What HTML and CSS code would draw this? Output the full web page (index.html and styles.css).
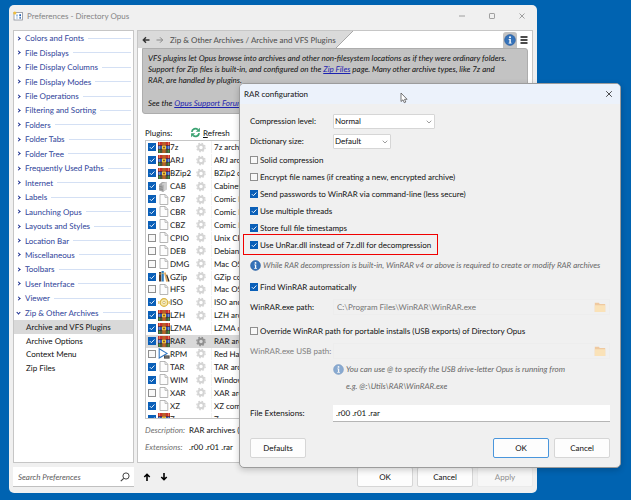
FILE: index.html
```html
<!DOCTYPE html>
<html lang="en">
<head>
<meta charset="utf-8">
<title>Preferences - Directory Opus</title>
<link rel="stylesheet" href="styles.css">
</head>
<body>
<svg class="defs" width="0" height="0" aria-hidden="true">
  <symbol id="rar" viewBox="0 0 12 11">
    <rect x="0" y="0" width="12" height="4" fill="#c8322e"/><rect x="0" y="3.6" width="12" height="3.6" fill="#3b5bb0"/><rect x="0" y="7" width="12" height="4" fill="#4a5a3a"/>
    <path d="M0 3.6h12M0 7.2h12" stroke="#3a2033" stroke-width=".7"/>
    <path d="M1.5 0v3.2M10.5 0v3.2" stroke="#e98b5a" stroke-width=".8"/><path d="M1.5 4v3M10.5 4v3" stroke="#86a4e0" stroke-width=".8"/><path d="M1.5 7.6v3M10.5 7.6v3" stroke="#3f9a48" stroke-width="1"/>
    <rect x="4.3" y="0" width="3.4" height="11" fill="#b8622a"/><rect x="4" y="3.8" width="4" height="3.4" fill="#f3d13e"/><rect x="5.2" y="4.7" width="1.6" height="1.6" fill="#7a3a20"/>
  </symbol>
  <symbol id="doc" viewBox="0 0 12 11"><path d="M2 .5h5.2l2.6 2.7v7.3H2z" fill="#fdfdfd" stroke="#a3a3a3" stroke-width=".8"/><path d="M7 .6v2.8h2.7" fill="none" stroke="#a3a3a3" stroke-width=".7"/></symbol>
  <symbol id="cab" viewBox="0 0 12 11"><path d="M1 3.5 4 1h5v7L5 10.8 1 9.6z" fill="#a8a8a8"/><path d="M4 2.6 9 .8v7.4l-4 2.6z" fill="#cfcfcf"/><path d="M1.3 5.5l3.4.6M1.3 7.8l3.4.6" stroke="#6f6f6f" stroke-width=".6"/><path d="M5 10.8V3.8" stroke="#808080" stroke-width=".6"/></symbol>
  <symbol id="gzip" viewBox="0 0 12 11"><path d="M1 1h2.3v9.5H1z" fill="#5b3a25"/><path d="M3.6 0h2.2v10.5H3.6z" fill="#2e7fc1"/><path d="M6 1.8l1.6-.6 2.6 9.2-2 .4z" fill="#dfa75e"/><path d="M8.2 4l1-.4 2.4 6.7-1.3.4z" fill="#333"/><path d="M1 3h2.3M3.6 2.4h2.2" stroke="#e7c66b" stroke-width=".7"/></symbol>
  <symbol id="iso" viewBox="0 0 12 11"><circle cx="6" cy="5.5" r="3.8" fill="#f6e9ae" stroke="#d9b445" stroke-width="1.2"/><circle cx="6" cy="5.5" r="1.2" fill="#fff" stroke="#b89a40" stroke-width=".6"/><path d="M.8 4v3M11.2 4v3" stroke="#e6c765" stroke-width="1.2"/></symbol>
  <symbol id="rpm" viewBox="0 0 12 11"><path d="M1.2.8 9 5.4 1.2 10z" fill="#fff" stroke="#2f76c4" stroke-width="1.1"/><rect x="6" y="7.4" width="5.6" height="3.2" fill="#4a4a4a"/><path d="M7 9h3.6" stroke="#bbb" stroke-width=".6"/></symbol>
  <symbol id="gear" viewBox="0 0 12 12"><circle cx="6" cy="6" r="4.6" fill="none" stroke="currentColor" stroke-width="1.3" stroke-dasharray="1.8 1.81"/><circle cx="6" cy="6" r="3" fill="none" stroke="currentColor" stroke-width="2.2"/></symbol>
  <symbol id="info" viewBox="0 0 12 12"><circle cx="6" cy="6" r="5.4" fill="#3572b9" stroke="#275b9d" stroke-width=".6"/><circle cx="6" cy="3.2" r="1" fill="#fff"/><path d="M4.6 5h2.2v3.7h.8v.8h-3v-.8h.8V5.8h-.8z" fill="#fff"/></symbol>
  <symbol id="down" viewBox="0 0 6 4"><path d="M.7.7 3 3 5.3.7" fill="none" stroke="#858585" stroke-width=".8"/></symbol>
  <symbol id="tick" viewBox="0 0 8 8"><path d="M1.8 4.100l1.600 1.600 3-3.200" fill="none" stroke="#fff" stroke-width=".9"/></symbol>
  <symbol id="folder" viewBox="0 0 12 12"><path d="M.8 1.8h4l1 1.2h5.4v8H.8z" fill="#efc9a0"/><path d="M.8 4.2h10.4v6.8H.8z" fill="#fae2b8"/></symbol>
</svg>

<main class="window">
  <header class="titlebar">
    <svg class="appicon" viewBox="0 0 10 10"><rect x="1" y="1.5" width="8.5" height="7.5" fill="#fff" stroke="#8a9099" stroke-width=".8"/><path d="M3 3.600h2v1.800H3zM3 6.400h2v1.200H3z" fill="#9ec1ea"/><path d="M6.300 3.200h1.700v1.700H6.300zM6.500 5.800h1.300v2H6.500z" fill="#235fae"/><circle cx="1.8" cy="2" r="1.6" fill="#eebd3d"/></svg>
    <h1>Preferences - Directory Opus</h1>
    <button class="cap" aria-label="Minimize"><svg viewBox="0 0 8 8"><path d="M1 4h6"/></svg></button>
    <button class="cap" aria-label="Maximize"><svg viewBox="0 0 8 8"><rect x="1.5" y="1.5" width="5" height="5" rx=".6"/></svg></button>
    <button class="cap" aria-label="Close"><svg viewBox="0 0 8 8"><path d="M1.500 1.500l5 5M6.500 1.500l-5 5"/></svg></button>
  </header>

  <div class="panes">
    <nav class="tree">
      <ul class="groups">
        <li><a href="#">Colors and Fonts</a></li>
        <li><a href="#">File Displays</a></li>
        <li><a href="#">File Display Columns</a></li>
        <li><a href="#">File Display Modes</a></li>
        <li><a href="#">File Operations</a></li>
        <li><a href="#">Filtering and Sorting</a></li>
        <li><a href="#">Folders</a></li>
        <li><a href="#">Folder Tabs</a></li>
        <li><a href="#">Folder Tree</a></li>
        <li><a href="#">Frequently Used Paths</a></li>
        <li><a href="#">Internet</a></li>
        <li><a href="#">Labels</a></li>
        <li><a href="#">Launching Opus</a></li>
        <li><a href="#">Layouts and Styles</a></li>
        <li><a href="#">Location Bar</a></li>
        <li><a href="#">Miscellaneous</a></li>
        <li><a href="#">Toolbars</a></li>
        <li><a href="#">User Interface</a></li>
        <li><a href="#">Viewer</a></li>
        <li class="open"><a href="#">Zip &amp; Other Archives</a></li>
      </ul>
      <ul class="pages">
        <li class="current"><a href="#">Archive and VFS Plugins</a></li>
        <li><a href="#">Archive Options</a></li>
        <li><a href="#">Context Menu</a></li>
        <li><a href="#">Zip Files</a></li>
      </ul>
    </nav>

    <section class="page">
      <div class="pathbar">
        <div class="crumbs">
          <svg class="nav" viewBox="0 0 8 8"><path d="M7.500 4H1.500M4 1.300 1.300 4 4 6.700" stroke="#333" stroke-width="1.4" fill="none"/></svg>
          <svg class="nav" viewBox="0 0 8 8"><path d="M.5 4h6M4 1.300 6.700 4 4 6.700" stroke="#888" stroke-width="1" fill="none"/></svg>
          <span>Zip &amp; Other Archives / Archive and VFS Plugins</span>
        </div>
        <svg class="slope" viewBox="0 0 17 17"><path d="M0 0h17L0 17z" fill="#dadada"/><path d="M17 0 0 17" stroke="#a8a8a8"/></svg>
        <button class="infotab" aria-label="Information"><svg viewBox="0 0 12 12"><use href="#info"/></svg></button>
        <button class="burger" aria-label="Menu"><svg viewBox="0 0 8 8"><path d="M.5 1h7M.5 4h7M.5 7h7" stroke="#111" stroke-width="1.3"/></svg></button>
      </div>
      <div class="about">
        <p>VFS plugins let Opus browse into archives and other non-filesystem locations as if they were ordinary folders.<br>Support for Zip files is built-in, and configured on the <a href="#">Zip Files</a> page. Many other archive types, like 7z and<br>RAR, are handled by plugins.</p>
        <p>See the <a href="#">Opus Support Forum</a></p>
      </div>
      <div class="tools">
        <span class="label">Plugins:</span>
        <button class="refresh"><svg viewBox="0 0 12 12"><path d="M2 5.300A4 4 0 0 1 8.600 2.800M10 6.700A4 4 0 0 1 3.400 9.200" fill="none" stroke="#3ba272" stroke-width="2"/><path d="M10.800.7v4.600H6.300zM1.200 11.300V6.700h4.500z" fill="#3ba272"/></svg><span><u>R</u>efresh</span></button>
      </div>
      <div class="list">
        <table>
          <tbody>
            <tr><td><span class="box"><input type="checkbox" aria-label="7z" checked><svg><use href="#tick"/></svg></span></td><td><svg><use href="#rar"/></svg></td><td>7z</td><td><svg><use href="#gear"/></svg></td><td>7z archives</td></tr>
            <tr><td><span class="box"><input type="checkbox" aria-label="ARJ" checked><svg><use href="#tick"/></svg></span></td><td><svg><use href="#rar"/></svg></td><td>ARJ</td><td><svg><use href="#gear"/></svg></td><td>ARJ archives</td></tr>
            <tr><td><span class="box"><input type="checkbox" aria-label="BZip2" checked><svg><use href="#tick"/></svg></span></td><td><svg><use href="#rar"/></svg></td><td>BZip2</td><td><svg><use href="#gear"/></svg></td><td>BZip2 compressed</td></tr>
            <tr><td><span class="box"><input type="checkbox" aria-label="CAB" checked><svg><use href="#tick"/></svg></span></td><td><svg><use href="#cab"/></svg></td><td>CAB</td><td><svg><use href="#gear"/></svg></td><td>Cabinet archives</td></tr>
            <tr><td><span class="box"><input type="checkbox" aria-label="CB7" checked><svg><use href="#tick"/></svg></span></td><td><svg><use href="#doc"/></svg></td><td>CB7</td><td><svg><use href="#gear"/></svg></td><td>Comic Book</td></tr>
            <tr><td><span class="box"><input type="checkbox" aria-label="CBR" checked><svg><use href="#tick"/></svg></span></td><td><svg><use href="#doc"/></svg></td><td>CBR</td><td><svg><use href="#gear"/></svg></td><td>Comic Book</td></tr>
            <tr><td><span class="box"><input type="checkbox" aria-label="CBZ" checked><svg><use href="#tick"/></svg></span></td><td><svg><use href="#doc"/></svg></td><td>CBZ</td><td><svg><use href="#gear"/></svg></td><td>Comic Book</td></tr>
            <tr><td><span class="box"><input type="checkbox" aria-label="CPIO"><svg><use href="#tick"/></svg></span></td><td><svg><use href="#doc"/></svg></td><td>CPIO</td><td><svg><use href="#gear"/></svg></td><td>Unix CPIO</td></tr>
            <tr><td><span class="box"><input type="checkbox" aria-label="DEB"><svg><use href="#tick"/></svg></span></td><td><svg><use href="#doc"/></svg></td><td>DEB</td><td><svg><use href="#gear"/></svg></td><td>Debian</td></tr>
            <tr><td><span class="box"><input type="checkbox" aria-label="DMG"><svg><use href="#tick"/></svg></span></td><td><svg><use href="#doc"/></svg></td><td>DMG</td><td><svg><use href="#gear"/></svg></td><td>Mac OS</td></tr>
            <tr><td><span class="box"><input type="checkbox" aria-label="GZip" checked><svg><use href="#tick"/></svg></span></td><td><svg><use href="#gzip"/></svg></td><td>GZip</td><td><svg><use href="#gear"/></svg></td><td>GZip compressed</td></tr>
            <tr><td><span class="box"><input type="checkbox" aria-label="HFS"><svg><use href="#tick"/></svg></span></td><td><svg><use href="#doc"/></svg></td><td>HFS</td><td><svg><use href="#gear"/></svg></td><td>Mac OS</td></tr>
            <tr><td><span class="box"><input type="checkbox" aria-label="ISO" checked><svg><use href="#tick"/></svg></span></td><td><svg><use href="#iso"/></svg></td><td>ISO</td><td><svg><use href="#gear"/></svg></td><td>ISO and</td></tr>
            <tr><td><span class="box"><input type="checkbox" aria-label="LZH" checked><svg><use href="#tick"/></svg></span></td><td><svg><use href="#rar"/></svg></td><td>LZH</td><td><svg><use href="#gear"/></svg></td><td>LZH archives</td></tr>
            <tr><td><span class="box"><input type="checkbox" aria-label="LZMA" checked><svg><use href="#tick"/></svg></span></td><td><svg><use href="#rar"/></svg></td><td>LZMA</td><td></td><td>LZMA compressed</td></tr>
            <tr class="selected"><td><span class="box"><input type="checkbox" aria-label="RAR" checked><svg><use href="#tick"/></svg></span></td><td><svg><use href="#rar"/></svg></td><td>RAR</td><td><svg><use href="#gear"/></svg></td><td>RAR archives</td></tr>
            <tr><td><span class="box"><input type="checkbox" aria-label="RPM"><svg><use href="#tick"/></svg></span></td><td><svg><use href="#rpm"/></svg></td><td>RPM</td><td><svg><use href="#gear"/></svg></td><td>Red Hat</td></tr>
            <tr><td><span class="box"><input type="checkbox" aria-label="TAR" checked><svg><use href="#tick"/></svg></span></td><td><svg><use href="#doc"/></svg></td><td>TAR</td><td><svg><use href="#gear"/></svg></td><td>TAR archives</td></tr>
            <tr><td><span class="box"><input type="checkbox" aria-label="WIM" checked><svg><use href="#tick"/></svg></span></td><td><svg><use href="#doc"/></svg></td><td>WIM</td><td><svg><use href="#gear"/></svg></td><td>Windows</td></tr>
            <tr><td><span class="box"><input type="checkbox" aria-label="XAR"><svg><use href="#tick"/></svg></span></td><td><svg><use href="#doc"/></svg></td><td>XAR</td><td><svg><use href="#gear"/></svg></td><td>XAR archives</td></tr>
            <tr><td><span class="box"><input type="checkbox" aria-label="XZ" checked><svg><use href="#tick"/></svg></span></td><td><svg><use href="#doc"/></svg></td><td>XZ</td><td><svg><use href="#gear"/></svg></td><td>XZ compressed</td></tr>
            <tr><td><span class="box"><input type="checkbox" aria-label="Z" checked><svg><use href="#tick"/></svg></span></td><td><svg><use href="#rar"/></svg></td><td>Z</td><td></td><td>Z</td></tr>
          </tbody>
        </table>
      </div>
      <dl class="details">
        <dt>Description:</dt><dd>RAR archives (</dd>
        <dt>Extensions:</dt><dd>.r00 .r01 .rar</dd>
      </dl>
    </section>
  </div>

  <footer class="actions">
    <div class="search"><input type="search" placeholder="Search Preferences" aria-label="Search Preferences"><svg viewBox="0 0 10 10"><circle cx="6" cy="4" r="3.1" fill="none" stroke="#444"/><path d="M3.700 6.300.8 9.200" stroke="#444" stroke-width="1.2"/></svg></div>
    <button class="move" aria-label="Move up"><svg viewBox="0 0 8 8"><path d="M4 8V1.500M1.300 4 4 1.300 6.700 4" fill="none" stroke="#000" stroke-width="1.6"/></svg></button>
    <button class="move" aria-label="Move down"><svg viewBox="0 0 8 8"><path d="M4 0v6.500M1.300 4 4 6.700 6.700 4" fill="none" stroke="#000" stroke-width="1.6"/></svg></button>
    <div class="buttons"><button class="btn">OK</button><button class="btn">Cancel</button><button class="btn" disabled>Apply</button></div>
  </footer>
</main>

<form class="dialog" role="dialog" aria-labelledby="dialog-title">
  <header>
    <h2 id="dialog-title">RAR configuration</h2>
    <button type="button" class="cap" aria-label="Close"><svg viewBox="0 0 8 8"><path d="M1.200 1.200l5.600 5.600M6.800 1.200l-5.600 5.600"/></svg></button>
    <svg class="pointer" viewBox="0 0 8 12"><path d="M1 1v8.500l2-1.700 1.300 2.900 1.500-.7-1.300-2.700h2.600z" fill="#fff" stroke="#555" stroke-width=".8"/></svg>
  </header>
  <div class="fields">
    <div class="row"><label for="level">Compression level:</label><span class="select wide"><select id="level"><option>Normal</option></select><svg viewBox="0 0 6 4"><use href="#down"/></svg></span></div>
    <div class="row"><label for="dict">Dictionary size:</label><span class="select"><select id="dict"><option>Default</option></select><svg viewBox="0 0 6 4"><use href="#down"/></svg></span></div>
    <label class="check"><span class="box"><input type="checkbox"><svg><use href="#tick"/></svg></span>Solid compression</label>
    <label class="check"><span class="box"><input type="checkbox"><svg><use href="#tick"/></svg></span>Encrypt file names (if creating a new, encrypted archive)</label>
    <label class="check"><span class="box"><input type="checkbox" checked><svg><use href="#tick"/></svg></span>Send passwords to WinRAR via command-line (less secure)</label>
    <label class="check"><span class="box"><input type="checkbox" checked><svg><use href="#tick"/></svg></span>Use multiple threads</label>
    <label class="check"><span class="box"><input type="checkbox" checked><svg><use href="#tick"/></svg></span>Store full file timestamps</label>
    <label class="check marked"><span class="box"><input type="checkbox" checked><svg><use href="#tick"/></svg></span>Use UnRar.dll instead of 7z.dll for decompression</label>
    <p class="note"><svg viewBox="0 0 12 12"><use href="#info"/></svg>While RAR decompression is built-in, WinRAR v4 or above is required to create or modify RAR archives</p>
    <label class="check roomy"><span class="box"><input type="checkbox" checked><svg><use href="#tick"/></svg></span>Find WinRAR automatically</label>
    <div class="row"><label for="exe">WinRAR.exe path:</label><span class="path"><input id="exe" type="text" value="C:\Program Files\WinRAR\WinRAR.exe" disabled><svg viewBox="0 0 12 12"><use href="#folder"/></svg></span></div>
    <label class="check roomy spaced"><span class="box"><input type="checkbox"><svg><use href="#tick"/></svg></span>Override WinRAR path for portable installs (USB exports) of Directory Opus</label>
    <div class="row off"><label for="usb">WinRAR.exe USB path:</label><span class="path"><input id="usb" type="text" disabled><svg viewBox="0 0 12 12"><use href="#folder"/></svg></span></div>
    <div class="hint">
      <svg viewBox="0 0 12 12"><use href="#info"/></svg>
      <p>You can use @ to specify the USB drive-letter Opus is running from<br>e.g. @:\Utils\RAR\WinRAR.exe</p>
    </div>
    <div class="row last"><label for="ext">File Extensions:</label><input class="text" id="ext" type="text" value=".r00 .r01 .rar"></div>
  </div>
  <footer><button type="button" class="btn first">Defaults</button><button type="button" class="btn default">OK</button><button type="button" class="btn">Cancel</button></footer>
</form>
</body>
</html>
```

FILE: styles.css
```css
* { box-sizing: border-box; }
body {
  margin: 0;
  min-height: 100vh;
  display: grid;
  grid-template-columns: minmax(0, 1fr);
  padding: 5px 94px 7px 9px;
  position: relative;
  background: #0063b1;
  color: #111;
  font: 8px/12px Lato, "Open Sans", sans-serif;
  text-rendering: geometricPrecision;
}
.defs { position: absolute; }
h1, h2, p, ul, dl, dd { margin: 0; padding: 0; font: inherit; }
ul { list-style: none; }
a { color: inherit; text-decoration: none; }
button, input, select { font: inherit; color: inherit; padding: 0; margin: 0; border: 0; background: none; min-width: 0; text-rendering: inherit; }
svg { flex: none; display: block; }

.box { display: grid; flex: none; width: 8px; height: 8px; }
.box > * { grid-area: 1 / 1; width: 8px; height: 8px; }
.box input { appearance: none; border: 1px solid #8f8f8f; background: #f8f8f8; }
.box input:checked { border-color: #0a5fb8; background: #0a5fb8; }
.box svg { pointer-events: none; z-index: 1; visibility: hidden; }
.box input:checked + svg { visibility: visible; }

/* main window */
.window {
  display: flex;
  flex-direction: column;
  min-width: 0;
  background: #f0f0f0;
  border-radius: 5px;
  padding: 0 4px 6px;
}
.titlebar { display: flex; align-items: center; height: 25px; padding-bottom: 4px; color: #858585; }
.appicon { width: 10px; height: 10px; margin-right: 4px; }
.titlebar h1 { flex: 1; }
.cap { width: 30px; height: 12px; display: grid; place-items: center; }
.titlebar .cap:last-child { margin-right: -4px; }
.cap svg { width: 8px; height: 8px; fill: none; stroke: #8a8a8a; stroke-width: .8; }

.panes { flex: 1; display: flex; gap: 3px; }
.tree { width: 121px; flex: none; background: #fff; border: 1px solid #c6c6c6; }
.groups { display: grid; grid-auto-rows: 1fr; height: 289px; }
.groups li { display: flex; align-items: center; gap: 4px; padding: 0 2px 0 3px; color: #2f449a; }
.groups li::before {
  content: "";
  width: 2px;
  height: 2px;
  margin-right: 1px;
  border: solid #14288c;
  border-width: 1px 1px 0 0;
  transform: rotate(45deg);
}
.groups .open::before { transform: rotate(135deg); }
.groups li::after { content: ""; flex: 1; height: 1px; background: #d4e0f4; }
.groups a { white-space: nowrap; }
.pages { display: grid; grid-auto-rows: 1fr; height: 55px; }
.pages li { display: flex; align-items: center; padding-left: 12px; }
.pages .current { background: #d9d9d9; }

.page { flex: 1; min-width: 0; display: flex; flex-direction: column; background: #fff; border: 1px solid #c6c6c6; }
.pathbar { display: flex; align-items: center; height: 17px; padding-right: 4px; }
.crumbs { display: flex; align-items: center; gap: 6px; height: 100%; padding-left: 4px; background: #dadada; color: #4a4a4a; white-space: nowrap; }
.nav { width: 8px; height: 8px; }
.slope { width: 17px; height: 17px; margin-right: auto; }
.infotab { display: grid; place-items: center; align-self: end; width: 14px; height: 16px; background: #c3c3c3; border-radius: 3px 3px 0 0; }
.infotab svg { width: 12px; height: 12px; }
.burger { margin-left: 3px; }
.burger svg { width: 8px; height: 8px; }
.about {
  margin: 0 4px;
  height: 66px;
  padding: 4px 5px;
  background: #c3c3c3;
  border: 1px solid #adadad;
  border-radius: 0 3px 3px 3px;
  font-style: italic;
  line-height: 11px;
  white-space: nowrap;
}
.about p + p { margin-top: 12px; }
.about a { color: #1c22b0; text-decoration: underline; }
.tools { display: flex; align-items: center; height: 26px; padding: 11px 7px 0; line-height: 14px; }
.label { width: 45px; }
.refresh { display: flex; align-items: center; gap: 2px; }
.refresh svg { width: 11px; height: 11px; }
.list { height: 279px; margin: 0 7px; border: 1px solid #c6c6c6; overflow: hidden; }
table, tbody, td { display: block; }
tbody { display: grid; grid-auto-rows: 1fr; height: 284px; }
tr { display: grid; grid-template-columns: 10px 12px 25px 16px 1fr; align-items: center; padding-left: 2px; }
td { padding: 0; white-space: nowrap; }
td:nth-child(5) { padding-left: 2px; border-left: 1px solid #f2f2f2; }
td > svg { width: 12px; height: 11px; color: #d4d4d4; }
.selected { background: #d9d9d9; }
.selected td:nth-child(4) svg { color: #8f8f8f; }
.selected td:nth-child(5) { border-color: #d9d9d9; }
.details { display: grid; grid-template-columns: 44px 1fr; row-gap: 5px; padding: 5px 7px; }
.details dt { font-style: italic; color: #707070; }

.actions { display: flex; align-items: center; height: 24px; padding-top: 4px; }
.search { display: flex; align-items: center; width: 121px; height: 20px; padding: 0 4px 0 5px; background: #fff; border-bottom: 1px solid #c0c0c0; }
.search input { flex: 1; outline: 0; appearance: none; }
.search input::placeholder { color: #5d5d5d; font-style: italic; }
.search svg { width: 10px; height: 10px; }
.move { width: 8px; margin-left: 9px; }
.move svg { width: 8px; height: 8px; }
.buttons { display: flex; gap: 4px; margin-left: auto; }
.btn { width: 56px; height: 20px; background: #fdfdfd; border: 1px solid #d6d6d6; border-radius: 2px; }
.btn:disabled { color: #8c8c8c; background: #f7f7f7; border-color: #ebebeb; }

/* dialog */
.dialog {
  position: absolute;
  top: 83px;
  left: 239px;
  right: 10px;
  background: #f0f0f0;
  border: 1px solid #9c9c9c;
  border-radius: 5px;
  box-shadow: 0 2px 6px rgba(0, 0, 0, .2);
  overflow: hidden;
}
.dialog header { display: flex; align-items: center; height: 20px; padding-left: 4px; background: #ecf2fb; position: relative; }
.dialog h2 { flex: 1; }
.dialog .cap { width: 22px; }
.dialog .cap svg { stroke: #222; }
.pointer { position: absolute; left: 160px; top: 8px; width: 8px; height: 12px; }
.fields { padding: 7px 10px 0; }
.row { display: flex; align-items: center; height: 20px; }
.row > label { width: 83px; flex: none; white-space: nowrap; }
.select { position: relative; width: 58px; height: 15px; }
.select.wide { width: 102px; }
.select select { appearance: none; width: 100%; height: 100%; padding-left: 1px; background: #fff; border: 1px solid #d6d6d6; border-radius: 1px; display: block; }
.select svg { position: absolute; right: 3px; top: 6px; width: 6px; height: 4px; }
.check { display: flex; align-items: center; gap: 2px; height: 17px; white-space: nowrap; }
.check.roomy { height: 20px; }
.check.spaced { margin-top: 4px; }
.marked { position: relative; width: max-content; }
.marked::after { content: ""; position: absolute; inset: -2px -7px; border: 1px solid #f00000; }
.note { display: flex; align-items: center; gap: 2px; height: 24px; color: #666; font-style: italic; white-space: nowrap; }
.note svg, .hint svg { width: 11px; height: 11px; }
.path { flex: 1; display: flex; align-items: center; height: 16px; padding: 0 3px; border: 1px solid #ededed; color: #757575; }
.path input { flex: 1; }
.path svg { width: 12px; height: 12px; }
.off label { color: #808080; }
.hint { display: flex; gap: 2px; padding-left: 83px; height: 34px; color: #666; font-style: italic; line-height: 17px; white-space: nowrap; }
.hint svg { margin-top: 3px; opacity: .55; }
.last { margin-top: 8px; }
.text { flex: 1; height: 17px; padding-left: 3px; background: #fff; border-bottom: 1px solid #b5b5b5; }
.dialog footer { display: flex; gap: 5px; padding: 15px 10px 9px; }
.first { margin-right: auto; }
.default { border-color: #4a96dc; }
```
